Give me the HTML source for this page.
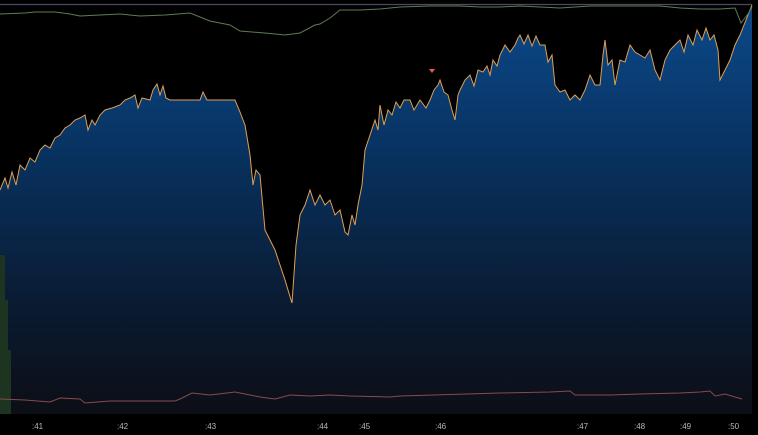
<!DOCTYPE html>
<html><head><style>
html,body{margin:0;padding:0;background:#000;width:758px;height:435px;overflow:hidden;font-family:"Liberation Sans",sans-serif;}
.l{position:absolute;top:422px;font-size:8px;color:#b8b8b8;}
</style></head><body>
<svg width="758" height="435" style="position:absolute;left:0;top:0">
<defs>
<linearGradient id="g" x1="0" y1="0" x2="0" y2="414" gradientUnits="userSpaceOnUse">
<stop offset="0" stop-color="#0b4a8c"/>
<stop offset="0.4" stop-color="#08305c"/>
<stop offset="0.75" stop-color="#0a1a30"/>
<stop offset="1" stop-color="#0c0e16"/>
</linearGradient>
</defs>
<rect x="0" y="0" width="758" height="435" fill="#000"/>
<line x1="0" y1="4.5" x2="752" y2="4.5" stroke="#4a4a66" stroke-width="1.2"/>
<polygon fill="url(#g)" points="0,414 0,190 5,178 8,188 12,172 16,185 20,165 25,170 30,158 35,162 40,150 45,145 50,148 55,138 60,135 65,128 70,125 75,120 80,118 85,115 88,130 92,120 95,125 100,115 105,110 112,108 120,105 125,100 130,98 135,95 138,108 142,98 150,100 153,90 157,84 160,95 163,86 166,98 170,100 200,100 203,92 207,100 235,100 240,112 245,125 250,155 253,185 256,170 260,175 265,230 275,250 285,280 288,290 292,303 296,245 300,215 305,205 310,190 315,205 320,195 325,205 330,200 335,215 340,210 345,232 348,235 352,215 355,225 358,205 362,185 365,150 370,135 375,120 378,130 380,105 384,125 388,110 392,115 396,102 400,108 404,100 410,100 414,110 420,100 426,108 430,100 434,90 438,85 440,80 444,92 448,95 452,110 455,120 458,95 460,90 465,80 470,75 474,86 478,70 483,72 487,66 490,75 493,60 497,66 500,55 505,45 510,52 515,45 518,38 520,35 524,44 528,35 532,46 536,36 540,45 545,45 548,62 552,55 555,85 560,92 565,90 570,100 575,95 580,100 585,90 590,75 595,85 600,85 603,55 605,40 608,65 612,60 615,85 618,70 620,60 625,62 630,45 635,52 640,55 645,58 650,50 655,70 660,80 665,60 670,50 675,45 680,40 684,52 688,35 693,45 697,30 702,40 706,28 710,40 714,35 718,50 720,80 725,70 730,60 735,45 740,35 744,25 748,15 752,5 752,414"/>
<polyline fill="none" stroke="#e0a050" stroke-width="1" points="0,190 5,178 8,188 12,172 16,185 20,165 25,170 30,158 35,162 40,150 45,145 50,148 55,138 60,135 65,128 70,125 75,120 80,118 85,115 88,130 92,120 95,125 100,115 105,110 112,108 120,105 125,100 130,98 135,95 138,108 142,98 150,100 153,90 157,84 160,95 163,86 166,98 170,100 200,100 203,92 207,100 235,100 240,112 245,125 250,155 253,185 256,170 260,175 265,230 275,250 285,280 288,290 292,303 296,245 300,215 305,205 310,190 315,205 320,195 325,205 330,200 335,215 340,210 345,232 348,235 352,215 355,225 358,205 362,185 365,150 370,135 375,120 378,130 380,105 384,125 388,110 392,115 396,102 400,108 404,100 410,100 414,110 420,100 426,108 430,100 434,90 438,85 440,80 444,92 448,95 452,110 455,120 458,95 460,90 465,80 470,75 474,86 478,70 483,72 487,66 490,75 493,60 497,66 500,55 505,45 510,52 515,45 518,38 520,35 524,44 528,35 532,46 536,36 540,45 545,45 548,62 552,55 555,85 560,92 565,90 570,100 575,95 580,100 585,90 590,75 595,85 600,85 603,55 605,40 608,65 612,60 615,85 618,70 620,60 625,62 630,45 635,52 640,55 645,58 650,50 655,70 660,80 665,60 670,50 675,45 680,40 684,52 688,35 693,45 697,30 702,40 706,28 710,40 714,35 718,50 720,80 725,70 730,60 735,45 740,35 744,25 748,15 752,5"/>
<polygon points="0,414 0,255 5,255 5,300 8,300 8,350 11,350 11,414" fill="#1d3520"/>
<polyline fill="none" stroke="#5f7a55" stroke-width="1" points="0,14 25,13 35,12 55,12 70,14 80,16 100,15 120,14 140,16 165,15 190,13 210,21 230,25 240,31 265,33 285,35 300,33 315,25 320,24 330,18 340,10 360,10 380,9 400,7 430,6 460,6 480,7 500,7 520,6 560,8 590,6 620,6 640,6 660,6 680,8 700,9 720,9 735,8 741,23 748,14 752,7"/>
<polyline fill="none" stroke="#8a4a4a" stroke-width="1" points="0,399 25,400 50,402 60,398 80,399 85,403 110,401 140,401 175,401 180,399 192,393 210,395 235,392 260,397 275,399 290,395 310,396 330,395 350,396 390,397 400,396 500,393 550,392 570,391 575,395 610,395 640,394 680,393 700,392 710,391 715,396 725,394 735,397 742,399"/>
<polygon points="429,69 435,69 432,73" fill="#e05a50"/>
</svg>
<div class="l" style="left:32px">:41</div>
<div class="l" style="left:117px">:42</div>
<div class="l" style="left:205px">:43</div>
<div class="l" style="left:317px">:44</div>
<div class="l" style="left:359px">:45</div>
<div class="l" style="left:435px">:46</div>
<div class="l" style="left:577px">:47</div>
<div class="l" style="left:634px">:48</div>
<div class="l" style="left:680px">:49</div>
<div class="l" style="left:728px">:50</div>
</body></html>
